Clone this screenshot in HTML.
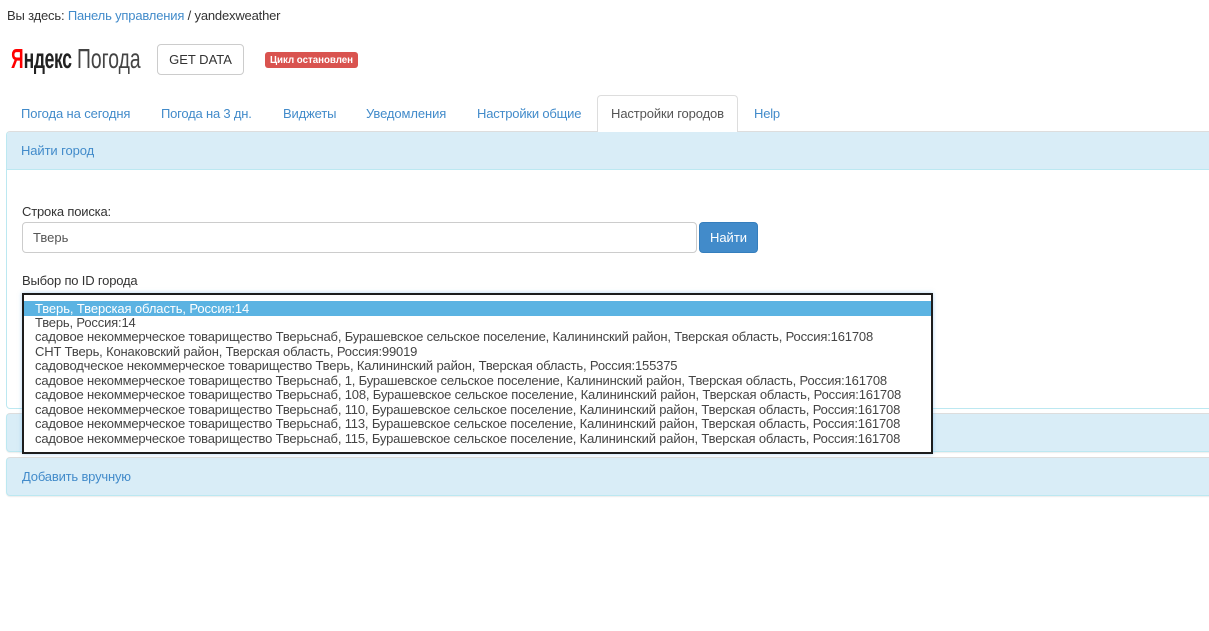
<!DOCTYPE html>
<html><head><meta charset="utf-8">
<style>
html,body{margin:0;padding:0;background:#fff;width:1209px;height:631px;overflow:hidden}
body{font-family:"Liberation Sans",sans-serif;font-size:13px;color:#333;position:relative;letter-spacing:-.18px}
.a{position:absolute;white-space:nowrap;line-height:20px}
.l{color:#428bca}
.panel{position:absolute;left:6px;width:1215px;box-sizing:border-box;border:1px solid #bce8f1;border-radius:4px;background:#fff}
.head{background:#d9edf7;box-sizing:border-box}
.opt{position:absolute;left:0;width:100%;height:14.5px;line-height:14.5px;padding-left:11px;box-sizing:border-box;white-space:nowrap;font-size:13px;letter-spacing:-.168px;color:#444}
</style></head><body>
<div class="a" style="left:7px;top:6px">Вы здесь: <span class="l">Панель управления</span> / yandexweather</div>

<div class="a" style="left:11px;top:44px;height:30px;line-height:30px;font-size:28px;letter-spacing:0;transform-origin:0 50%;transform:scaleX(.625);color:#222"><span style="color:#f00;font-weight:bold">Я</span><span style="font-weight:bold;letter-spacing:-.5px">ндекс</span></div>
<div class="a" style="left:77px;top:44px;height:30px;line-height:30px;font-size:28px;letter-spacing:0;transform-origin:0 50%;transform:scaleX(.69);color:#444">Погода</div>

<div class="a" style="left:157px;top:44px;width:87px;height:31px;box-sizing:border-box;border:1px solid #ccc;border-radius:4px;text-align:center;line-height:29px;color:#333;letter-spacing:0">GET DATA</div>
<div class="a" style="left:265px;top:52px;width:93px;height:16px;background:#d9534f;border-radius:3px;color:#fff;font-weight:bold;font-size:9.75px;letter-spacing:-.03px;text-align:center;line-height:17px">Цикл остановлен</div>

<div class="a l" style="left:21px;top:104px;letter-spacing:-.12px">Погода на сегодня</div>
<div class="a l" style="left:161px;top:104px;letter-spacing:-.2px">Погода на 3 дн.</div>
<div class="a l" style="left:283px;top:104px;letter-spacing:-.14px">Виджеты</div>
<div class="a l" style="left:366px;top:104px;letter-spacing:-.1px">Уведомления</div>
<div class="a l" style="left:477px;top:104px;letter-spacing:-.2px">Настройки общие</div>
<div class="a l" style="left:754px;top:104px;letter-spacing:-.2px">Help</div>

<div class="panel" style="top:131px;height:278px;border-top:1px solid #ddd">
  <div class="head" style="height:38px;border-bottom:1px solid #bce8f1;padding:9px 14px;line-height:20px;color:#428bca;border-radius:3px 3px 0 0;letter-spacing:-.1px">Найти город</div>
</div>
<div class="a" style="left:597px;top:95px;width:141px;height:37px;box-sizing:border-box;border:1px solid #ddd;border-bottom:0;border-radius:4px 4px 0 0;background:#fff;text-align:center;line-height:35px;color:#555;letter-spacing:-.12px">Настройки городов</div>

<div class="a" style="left:22px;top:202px">Строка поиска:</div>
<div class="a" style="left:22px;top:222px;width:675px;height:31px;box-sizing:border-box;border:1px solid #ccc;border-radius:4px;padding-left:10px;line-height:29px;color:#555;letter-spacing:0">Тверь</div>
<div class="a" style="left:699px;top:222px;width:59px;height:31px;box-sizing:border-box;background:#428bca;border:1px solid #357ebd;border-radius:4px;color:#fff;text-align:center;line-height:29px;letter-spacing:0">Найти</div>

<div class="a" style="left:22px;top:271px">Выбор по ID города</div>

<div class="panel" style="top:413px;height:39px;background:#d9edf7;border-top-color:#ddd;box-shadow:0 1px 1px rgba(0,0,0,.08)"></div>
<div class="panel" style="top:457px;height:39px;background:#d9edf7;border-top-color:#ddd;box-shadow:0 1px 1px rgba(0,0,0,.08)">
  <div class="l" style="padding:9px 15px;line-height:20px">Добавить вручную</div>
</div>

<div style="position:absolute;left:22px;top:293px;width:911px;height:161px;box-sizing:border-box;border:2px solid #1d1d1d;background:#fff;box-shadow:0 0 4px rgba(102,175,233,.5)">
  <div class="opt" style="top:6px;background:#5bb3e2;color:#fff;height:15px;line-height:15px;letter-spacing:-.1px">Тверь, Тверская область, Россия:14</div>
  <div class="opt" style="top:21px">Тверь, Россия:14</div>
  <div class="opt" style="top:35px">садовое некоммерческое товарищество Тверьснаб, Бурашевское сельское поселение, Калининский район, Тверская область, Россия:161708</div>
  <div class="opt" style="top:50px">СНТ Тверь, Конаковский район, Тверская область, Россия:99019</div>
  <div class="opt" style="top:64px">садоводческое некоммерческое товарищество Тверь, Калининский район, Тверская область, Россия:155375</div>
  <div class="opt" style="top:79px">садовое некоммерческое товарищество Тверьснаб, 1, Бурашевское сельское поселение, Калининский район, Тверская область, Россия:161708</div>
  <div class="opt" style="top:93px">садовое некоммерческое товарищество Тверьснаб, 108, Бурашевское сельское поселение, Калининский район, Тверская область, Россия:161708</div>
  <div class="opt" style="top:108px">садовое некоммерческое товарищество Тверьснаб, 110, Бурашевское сельское поселение, Калининский район, Тверская область, Россия:161708</div>
  <div class="opt" style="top:122px">садовое некоммерческое товарищество Тверьснаб, 113, Бурашевское сельское поселение, Калининский район, Тверская область, Россия:161708</div>
  <div class="opt" style="top:137px">садовое некоммерческое товарищество Тверьснаб, 115, Бурашевское сельское поселение, Калининский район, Тверская область, Россия:161708</div>
</div>
</body></html>
